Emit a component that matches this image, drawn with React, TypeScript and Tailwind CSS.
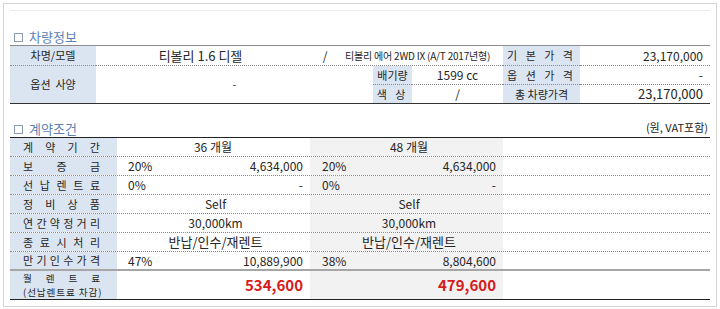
import React from "react";

type Cell = { center?: string; pct?: string; amt?: string; big?: boolean; shift?: string };
type Row = { label: string; a: Cell; b: Cell };

const rows: Row[] = [
  { label: "계약기간", a: { center: "36 개월", shift: "pr-[12px]" }, b: { center: "48 개월", shift: "pr-[6px]" } },
  { label: "보증금", a: { pct: "20%", amt: "4,634,000" }, b: { pct: "20%", amt: "4,634,000" } },
  { label: "선납렌트료", a: { pct: "0%", amt: "-" }, b: { pct: "0%", amt: "-" } },
  { label: "정비상품", a: { center: "Self" }, b: { center: "Self" } },
  { label: "연간약정거리", a: { center: "30,000km" }, b: { center: "30,000km" } },
  { label: "종료시처리", a: { center: "반납/인수/재렌트", big: true }, b: { center: "반납/인수/재렌트", big: true } },
  { label: "만기인수가격", a: { pct: "47%", amt: "10,889,900" }, b: { pct: "38%", amt: "8,804,600" } },
];

const Spread = ({ text, className = "" }: { text: string; className?: string }) => (
  <div className={`flex justify-between ${className}`}>
    {text.split("").map((c, i) => (
      <span key={i}>{c}</span>
    ))}
  </div>
);

const Title = ({ text }: { text: string }) => (
  <div className="flex items-center gap-[6px] pl-[4px] text-[13px] leading-[16px] text-[#5b82b4]">
    <span className="w-[9px] h-[9px] border border-[#8a9bb0] bg-white" />
    <span>{text}</span>
  </div>
);

const ValueCell = ({ cell, className }: { cell: Cell; className: string }) => {
  if (cell.center) {
    return (
      <div className={`${className} flex items-center justify-center ${cell.shift ?? ""} ${cell.big ? "text-[13px]" : "text-[12px]"}`}>
        {cell.center}
      </div>
    );
  }
  return (
    <div className={`${className} flex items-center justify-between text-[12px]`}>
      <span>{cell.pct}</span>
      <span>{cell.amt}</span>
    </div>
  );
};

export default function App() {
  return (
    <div className="w-[720px] h-[309px] bg-white pt-[3px] px-[3px] text-[#262626] font-['Noto_Sans_CJK_KR','Noto_Sans',sans-serif]">
      <div className="h-[304px] border border-[#d4d4d4] pt-[6px] px-[6px]">
        <div className="border-t border-[#ececec]">
          {/* 차량정보 */}
          <div className="h-[34px] flex items-end">
            <Title text="차량정보" />
          </div>
          <div className="grid grid-cols-[86px_277px_39px_91px_77px_130px] grid-rows-[20px_19px_18px] border-t border-b border-t-[#8c8c8c] border-b-[#333] text-[11px]">
            <div className="bg-[#dbe5f1] border-b border-dotted border-[#8a8a8a] flex items-center justify-center">차명/모델</div>
            <div className="col-span-3 border-b border-dotted border-[#8a8a8a] flex items-center">
              <div className="w-[209px] text-center text-[13px]">티볼리 1.6 디젤</div>
              <div className="w-[40px] text-center text-[12px]">/</div>
              <div className="text-[10px] tracking-[-0.2px]">티볼리 에어 2WD IX (A/T 2017년형)</div>
            </div>
            <div className="bg-[#dbe5f1] border-b border-dotted border-[#8a8a8a] flex items-center justify-center tracking-[3px]">기 본 가 격</div>
            <div className="border-b border-dotted border-[#8a8a8a] flex items-center justify-end pr-[7px] text-[12px]">23,170,000</div>

            <div className="row-span-2 bg-[#dbe5f1] flex items-center justify-center whitespace-pre">옵션  사양</div>
            <div className="row-span-2 flex items-center justify-center text-[11px]">-</div>
            <div className="bg-[#dbe5f1] border-b border-dotted border-[#8a8a8a] flex items-center justify-center">배기량</div>
            <div className="border-b border-dotted border-[#8a8a8a] flex items-center justify-center text-[12px]">1599 cc</div>
            <div className="bg-[#dbe5f1] border-b border-dotted border-[#8a8a8a] flex items-center justify-center tracking-[3px]">옵 션 가 격</div>
            <div className="border-b border-dotted border-[#8a8a8a] flex items-center justify-end pr-[7px] text-[12px]">-</div>

            <div className="bg-[#dbe5f1] flex items-center justify-center tracking-[3px]">색 상</div>
            <div className="flex items-center justify-center text-[12px]">/</div>
            <div className="bg-[#dbe5f1] flex items-center justify-center">총 차량가격</div>
            <div className="flex items-center justify-end pr-[7px] text-[13px]">23,170,000</div>
          </div>

          {/* 계약조건 */}
          <div className="h-[33px] flex items-end justify-between">
            <Title text="계약조건" />
            <div className="pr-[2px] text-[11px] leading-[16px] pb-[2px]">(원, VAT포함)</div>
          </div>
          <div className="border-t border-b border-[#222]">
            {rows.map((r, i) => (
              <div
                key={r.label}
                className={`flex ${i === rows.length - 1 ? "h-[19px] border-b-2 border-solid border-[#a6a6a6]" : "h-[19px] border-b border-dotted border-[#8a8a8a]"}`}
              >
                <Spread text={r.label} className="w-[107px] bg-[#dbe5f1] pl-[13px] pr-[17px] items-center text-[11px]" />
                <ValueCell cell={r.a} className="w-[193px] pl-[11px] pr-[7px]" />
                <ValueCell cell={r.b} className="w-[193px] bg-[#f2f2f2] pl-[12px] pr-[7px]" />
                <div className="flex-1" />
              </div>
            ))}
            <div className="flex h-[28px]">
              <div className="w-[107px] bg-[#dbe5f1] pl-[13px] pr-[6px] flex flex-col justify-center text-[9.6px] leading-[14px]">
                <Spread text="월렌트료" className="pr-[11px]" />
                <div className="tracking-[0.9px]">(선납렌트료 차감)</div>
              </div>
              <div className="w-[193px] flex items-center justify-end pr-[7px] text-[15px] font-bold text-[#d51b1b]">534,600</div>
              <div className="w-[193px] bg-[#f2f2f2] flex items-center justify-end pr-[7px] text-[15px] font-bold text-[#d51b1b]">479,600</div>
              <div className="flex-1" />
            </div>
          </div>
        </div>
      </div>
    </div>
  );
}
